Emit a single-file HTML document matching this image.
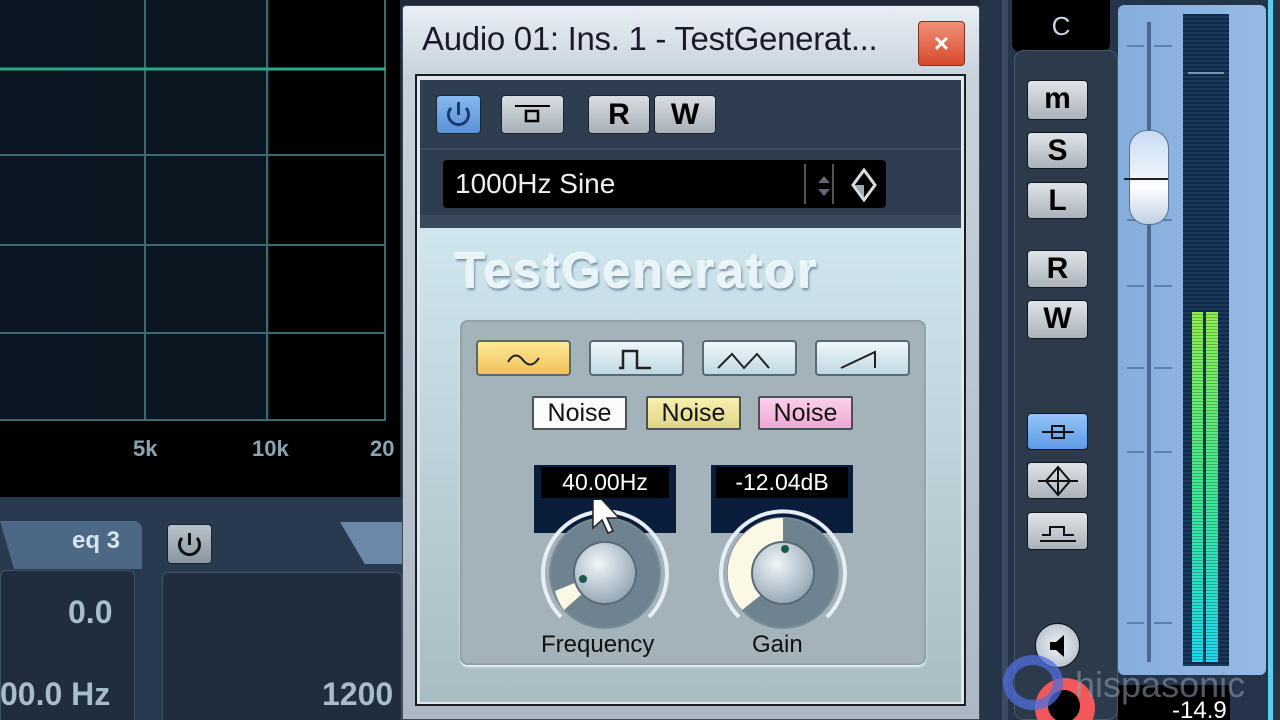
<!DOCTYPE html>
<html style="overflow:hidden;width:1280px;height:720px"><head><meta charset="utf-8"><style>
*{margin:0;padding:0;box-sizing:border-box}
body{width:1280px;height:720px;overflow:hidden;background:#1e2a38;position:relative;font-family:"Liberation Sans",sans-serif}
.a{position:absolute}
.btn{position:absolute;border-radius:4px;background:linear-gradient(#d8dde2,#a8b0b8);border:1px solid #1a2430;text-align:center;font-weight:bold;color:#000}
.wb{position:absolute;top:340px;height:36px;width:95px;border-radius:4px;border:2px solid #5a6870;background:linear-gradient(#eef8fc,#c0d8e2)}
.nb{position:absolute;top:396px;height:34px;width:95px;border:2px solid #4a5258;border-radius:2px;font-size:25px;text-align:center;line-height:30px;color:#111}
.ms{position:absolute;left:1027px;width:61px;border-radius:4px;background:linear-gradient(#dfe4e8,#aab2ba);border:1px solid #101820;text-align:center;font-weight:bold;font-size:30px;color:#000;line-height:36px}
</style></head><body>
<div class="a" style="left:0;top:0;width:400px;height:497px;background:#000"></div>
<div class="a" style="left:0;top:0;width:385px;height:420px;background:linear-gradient(90deg,#0c1622,#0c1620 70%,#000 70%)"></div>
<svg class="a" style="left:0;top:0" width="400" height="430">
<g stroke="#3c6a70" stroke-width="2">
<line x1="145" y1="0" x2="145" y2="421"/><line x1="267" y1="0" x2="267" y2="421"/><line x1="385" y1="0" x2="385" y2="421"/>
<line x1="0" y1="155" x2="385" y2="155"/><line x1="0" y1="245" x2="385" y2="245"/><line x1="0" y1="333" x2="385" y2="333"/><line x1="0" y1="420" x2="385" y2="420"/>
</g>
<line x1="0" y1="69" x2="386" y2="69" stroke="#2aa888" stroke-width="3"/>
</svg>
<div class="a" style="left:133px;top:436px;color:#8aa4b4;font-size:22px;font-weight:bold">5k</div>
<div class="a" style="left:252px;top:436px;color:#8aa4b4;font-size:22px;font-weight:bold">10k</div>
<div class="a" style="left:370px;top:436px;color:#8aa4b4;font-size:22px;font-weight:bold">20</div>
<div class="a" style="left:0;top:497px;width:402px;height:223px;background:#2a3a4e"></div>
<div class="a" style="left:0;top:521px;width:142px;height:48px;background:#4d6884;border-radius:0 8px 0 0"></div>
<div class="a" style="left:0;top:521px;width:14px;height:48px;background:#2a3a4e;clip-path:polygon(0 0,0 100%,100% 100%)"></div>
<div class="a" style="left:72px;top:527px;color:#d8e4ee;font-size:24px;font-weight:bold">eq 3</div>
<div class="a" style="left:0;top:570px;width:135px;height:160px;background:#1f2d3e;border:1px solid #3e526a;border-radius:6px"></div>
<div class="a" style="left:68px;top:594px;color:#a8bccc;font-size:32px;font-weight:bold">0.0</div>
<div class="a" style="left:0;top:676px;color:#a8bccc;font-size:32px;font-weight:bold">00.0 Hz</div>
<div class="btn" style="left:167px;top:524px;width:45px;height:40px;background:linear-gradient(#b8c4cc,#8896a2)"><svg width="43" height="38"><path d="M14 13a10 10 0 1 0 15 0" fill="none" stroke="#111" stroke-width="3"/><line x1="21.5" y1="8" x2="21.5" y2="20" stroke="#111" stroke-width="3"/></svg></div>
<div class="a" style="left:340px;top:522px;width:62px;height:42px;background:#6a88a8;clip-path:polygon(0 0,100% 0,100% 100%,40% 100%)"></div>
<div class="a" style="left:162px;top:572px;width:240px;height:160px;background:#1f2d3e;border:1px solid #3e526a;border-radius:6px"></div>
<div class="a" style="left:322px;top:676px;color:#a8bccc;font-size:32px;font-weight:bold">1200</div>

<div class="a" style="left:402px;top:5px;width:578px;height:715px;background:linear-gradient(#e8eef4,#c8d2dc 10%,#aeb8c4);border:1px solid #404a55;border-radius:4px 4px 0 0"></div>
<div class="a" style="left:422px;top:20px;font-size:33px;color:#1a1a2a;white-space:nowrap;letter-spacing:-0.3px">Audio 01: Ins. 1 - TestGenerat...</div>
<div class="a" style="left:918px;top:21px;width:47px;height:45px;border-radius:4px;background:linear-gradient(#f0907a,#d84a2a);border:1px solid #80301e;color:#fff;font-size:26px;font-weight:bold;text-align:center;line-height:42px">×</div>
<div class="a" style="left:415px;top:74px;width:551px;height:632px;border:2px solid #1a1e24;background:#e0e6ea"></div>
<div class="a" style="left:420px;top:80px;width:541px;height:150px;background:#2e3e50"></div>
<div class="a" style="left:420px;top:148px;width:541px;height:2px;background:#3e5064"></div>
<div class="a" style="left:420px;top:215px;width:541px;height:13px;background:#3a4a5c"></div>
<div class="a" style="left:436px;top:95px;width:45px;height:39px;border-radius:4px;background:linear-gradient(#86b8f0,#5a92d8);border:1px solid #1a2838"><svg width="43" height="37"><path d="M14 12a10 10 0 1 0 15 0" fill="none" stroke="#1a3a70" stroke-width="3"/><line x1="21.5" y1="6" x2="21.5" y2="19" stroke="#1a3a70" stroke-width="3"/></svg></div>
<div class="btn" style="left:501px;top:95px;width:63px;height:39px"><svg width="61" height="37"><line x1="13" y1="10" x2="48" y2="10" stroke="#000" stroke-width="2"/><rect x="24" y="15" width="12" height="10" fill="none" stroke="#000" stroke-width="2.5"/></svg></div>
<div class="btn" style="left:588px;top:95px;width:62px;height:39px;font-size:30px;line-height:37px">R</div>
<div class="btn" style="left:654px;top:95px;width:62px;height:39px;font-size:30px;line-height:37px">W</div>
<div class="a" style="left:443px;top:160px;width:443px;height:48px;background:#000;border-radius:4px"></div>
<div class="a" style="left:455px;top:168px;color:#f0f0f0;font-size:28px">1000Hz Sine</div>
<div class="a" style="left:804px;top:164px;width:2px;height:40px;background:#555"></div>
<div class="a" style="left:832px;top:164px;width:2px;height:40px;background:#555"></div>
<svg class="a" style="left:806px;top:162px" width="80" height="44"><path d="M18 14l-6 7h12z M12 27h12l-6 7z" fill="#667"/><path d="M58 8l11 15-11 15-11-15z" fill="none" stroke="#ddd" stroke-width="3"/><path d="M58 23l-9 0 9 13z" fill="#9ab"/></svg>
<div class="a" style="left:420px;top:228px;width:541px;height:474px;background:linear-gradient(#d0e6ee,#b8ccd4 60%,#a8bcc4)"></div>
<div class="a" style="left:455px;top:242px;font-size:50px;font-weight:bold;color:#e8f4f8;letter-spacing:2px;text-shadow:1px 2px 2px #7890a0,-1px -1px 1px #fff">TestGenerator</div>
<div class="a" style="left:460px;top:320px;width:466px;height:345px;background:#a4b3b9;border-radius:8px;box-shadow:inset 0 0 3px #6a7a82,0 2px 2px #e8f4f8"></div>
<div class="wb" style="left:476px;background:linear-gradient(#ffe898,#f0c258)"><svg width="91" height="32"><path d="M30 20q7-12 15-2t16-2" fill="none" stroke="#222" stroke-width="2"/></svg></div>
<div class="wb" style="left:589px"><svg width="91" height="32"><path d="M28 26h4v-17h14v17h14" fill="none" stroke="#222" stroke-width="2.5"/></svg></div>
<div class="wb" style="left:702px"><svg width="91" height="32"><path d="M14 26l14-14 12 14 13-14 12 14" fill="none" stroke="#222" stroke-width="2"/></svg></div>
<div class="wb" style="left:815px"><svg width="91" height="32"><path d="M24 26l34-16v16" fill="none" stroke="#222" stroke-width="2"/></svg></div>
<div class="nb" style="left:532px;background:#fafcfc">Noise</div>
<div class="nb" style="left:646px;background:linear-gradient(#f8f0b0,#e0d488)">Noise</div>
<div class="nb" style="left:758px;background:linear-gradient(#fcd0ec,#f0a8d4)">Noise</div>
<div class="a" style="left:534px;top:465px;width:142px;height:68px;background:#0a1e3c"></div>
<div class="a" style="left:541px;top:467px;width:128px;height:31px;background:#000;color:#fff;font-size:23px;text-align:center;line-height:31px">40.00Hz</div>
<div class="a" style="left:711px;top:465px;width:142px;height:68px;background:#0a1e3c"></div>
<div class="a" style="left:716px;top:467px;width:132px;height:31px;background:#000;color:#fff;font-size:23px;text-align:center;line-height:31px">-12.04dB</div>
<svg class="a" style="left:530px;top:500px" width="340" height="150">
<defs><radialGradient id="k" cx="40%" cy="35%" r="70%"><stop offset="0" stop-color="#f0f6fa"/><stop offset="1" stop-color="#8fa2b0"/></radialGradient></defs>
<g transform="translate(75,73)">
<path d="M-44 44A62 62 0 1 1 44 44" fill="none" stroke="#e4eef4" stroke-width="4"/>
<circle r="56" fill="#7a8c98"/><circle r="54" fill="#6f8290"/>
<path d="M-41 37A55 55 0 0 1 -50 18L-28 9A31 31 0 0 0 -22 20z" fill="#fbf8e6"/>
<circle r="31" fill="url(#k)" stroke="#5a6a78" stroke-width="2"/>
<circle cx="-22" cy="6" r="4" fill="#1a5a48"/>
</g>
<g transform="translate(253,73)">
<path d="M-44 44A62 62 0 1 1 44 44" fill="none" stroke="#e4eef4" stroke-width="4"/>
<circle r="56" fill="#7a8c98"/><circle r="54" fill="#6f8290"/>
<path d="M-41 37A55 55 0 0 1 0 -55L0 -31A31 31 0 0 0 -22 22z" fill="#fbf8e6"/>
<circle r="31" fill="url(#k)" stroke="#5a6a78" stroke-width="2"/>
<circle cx="2" cy="-24" r="4" fill="#1a5a48"/>
</g>
<path d="M63 -10v38l9-8 6 13 5-2-6-13h12z" fill="#fff" stroke="#222" stroke-width="1.5"/>
</svg>
<div class="a" style="left:541px;top:631px;font-size:24px;color:#111">Frequency</div>
<div class="a" style="left:752px;top:631px;font-size:24px;color:#111">Gain</div>

<div class="a" style="left:980px;top:0;width:300px;height:720px;background:#26344a"></div>
<div class="a" style="left:1002px;top:0;width:6px;height:720px;background:#3c4c60"></div>
<div class="a" style="left:1012px;top:0;width:98px;height:52px;background:#000;border-radius:0 0 8px 8px;color:#c8d4e0;font-size:26px;text-align:center;line-height:52px">C</div>
<div class="a" style="left:1014px;top:50px;width:104px;height:670px;background:#2c3a4c;border:1px solid #46586c;border-radius:10px"></div>
<div class="ms" style="left:1027px;top:80px;height:40px">m</div>
<div class="ms" style="top:132px;height:37px">S</div>
<div class="ms" style="top:182px;height:37px">L</div>
<div class="ms" style="top:250px;height:38px">R</div>
<div class="ms" style="top:300px;height:39px">W</div>
<div class="ms" style="top:413px;height:37px;background:linear-gradient(#94c4fa,#5e9ae6)"><svg width="59" height="35"><line x1="14" y1="18" x2="46" y2="18" stroke="#111" stroke-width="2"/><rect x="24" y="12" width="12" height="12" fill="none" stroke="#111" stroke-width="2"/></svg></div>
<div class="ms" style="top:462px;height:37px"><svg width="59" height="35"><path d="M30 4l-12 14 12 14 12-14z M10 18h40" fill="none" stroke="#111" stroke-width="2"/><line x1="30" y1="4" x2="30" y2="32" stroke="#111" stroke-width="2"/></svg></div>
<div class="ms" style="top:512px;height:38px"><svg width="59" height="36"><path d="M12 28h36 M14 22h8v-8h14v8h10" fill="none" stroke="#111" stroke-width="2"/></svg></div>
<div class="a" style="left:1035px;top:623px;width:45px;height:45px;border-radius:50%;background:radial-gradient(#f0f4f8,#a8b4c0);border:1px solid #111"></div>
<svg class="a" style="left:1044px;top:632px" width="28" height="28"><path d="M6 10h6l8-7v22l-8-7h-6z" fill="#000"/></svg>
<div class="a" style="left:1035px;top:678px;width:60px;height:60px;border-radius:50%;background:#f0585a"></div>
<div class="a" style="left:1048px;top:690px;width:32px;height:32px;border-radius:50%;background:#000"></div>
<div class="a" style="left:1118px;top:5px;width:148px;height:670px;background:linear-gradient(90deg,#86aedc,#94bae6);border-radius:6px"></div>
<div class="a" style="left:1147px;top:22px;width:4px;height:640px;background:#4a6a90"></div>
<svg class="a" style="left:1122px;top:30px" width="70" height="640"><g stroke="#5a80ac" stroke-width="2"><line x1="5" y1="16" x2="22" y2="16"/><line x1="32" y1="16" x2="50" y2="16"/><line x1="5" y1="190" x2="22" y2="190"/><line x1="32" y1="190" x2="50" y2="190"/><line x1="5" y1="256" x2="22" y2="256"/><line x1="32" y1="256" x2="50" y2="256"/><line x1="5" y1="338" x2="22" y2="338"/><line x1="32" y1="338" x2="50" y2="338"/><line x1="5" y1="422" x2="22" y2="422"/><line x1="32" y1="422" x2="50" y2="422"/><line x1="5" y1="593" x2="22" y2="593"/><line x1="32" y1="593" x2="50" y2="593"/></g></svg>
<div class="a" style="left:1129px;top:130px;width:40px;height:95px;border-radius:18px;background:linear-gradient(#c8dcf4,#eef4fc 50%,#fff 60%,#c0d0e4);border:1px solid #5a7090"></div>
<div class="a" style="left:1124px;top:178px;width:44px;height:2px;background:#222"></div>
<div class="a" style="left:1183px;top:14px;width:46px;height:652px;background:repeating-linear-gradient(#0e2a48 0 2px,#1c3a5c 2px 4px)"></div>
<div class="a" style="left:1188px;top:72px;width:36px;height:2px;background:#7a96b4"></div>
<div class="a" style="left:1192px;top:312px;width:11px;height:350px;background:repeating-linear-gradient(transparent 0 2px,rgba(0,0,0,.25) 2px 3px),linear-gradient(#90f050,#40e890 50%,#20d8f0)"></div>
<div class="a" style="left:1206px;top:312px;width:12px;height:350px;background:repeating-linear-gradient(transparent 0 2px,rgba(0,0,0,.25) 2px 3px),linear-gradient(#90f050,#40e890 50%,#20d8f0)"></div>
<div class="a" style="left:1268px;top:0;width:5px;height:720px;background:#5ad0f0"></div>
<div class="a" style="left:1118px;top:685px;width:112px;height:35px;background:#000"></div>
<div class="a" style="left:1172px;top:697px;color:#fff;font-size:24px">-14.9</div>
<div class="a" style="left:1003px;top:655px;width:60px;height:55px;border-radius:50%;border:10px solid rgba(80,110,220,.75)"></div>
<div class="a" style="left:1075px;top:664px;font-size:36px;color:rgba(150,160,180,.55);white-space:nowrap">hispasonic</div>
</body></html>
